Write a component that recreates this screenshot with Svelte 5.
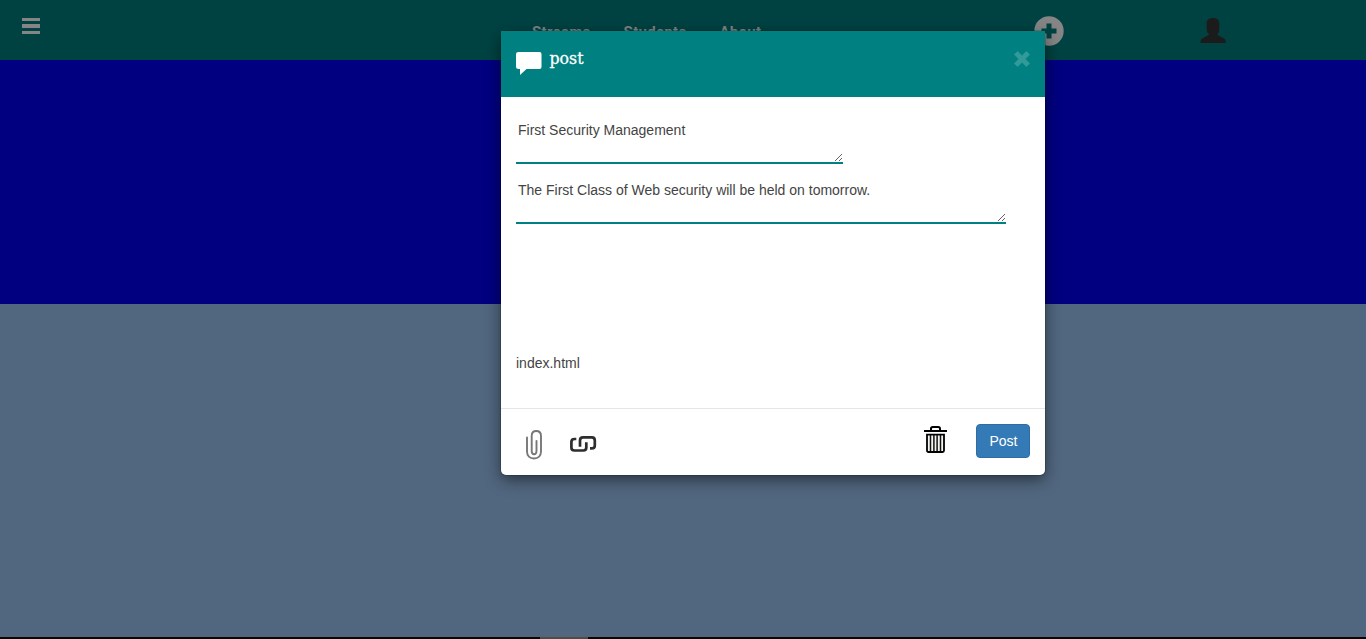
<script>
  const links = ['Streams', 'Students', 'About'];
  let title = $state('First Security Management');
  let message = $state('The First Class of Web security will be held on tomorrow.');
</script>

<div class="page">
  <header class="bar">
    <svg class="menu" width="18" height="17" viewBox="0 0 18 17" shape-rendering="crispEdges"><path d="M0 0h18v3H0zM0 6h18v4H0zM0 13h18v3H0z" fill="#858585" /></svg>
    <nav>
      {#each links as link}
        <span>{link}</span>
      {/each}
    </nav>
    <svg class="add" width="30" height="30" viewBox="0 0 30 30"><circle cx="15" cy="15" r="14.7" fill="#858585" /><path d="M12.500 7.500h5v5H22.500v5h-5V22.500h-5v-5H7.500v-5h5z" fill="#004242" /></svg>
    <svg class="user" width="26" height="26" viewBox="0 0 26 26"><path d="M13 0c4.300 0 6.300 2.200 6.300 5.500v5.500c0 2.300-.6 3.800-1.800 5v1l6.500 3.500q1.700 1 1.700 2.500v2H.5v-2q0-1.500 1.700-2.500L8.700 17v-1c-1.200-1.200-2-2.700-2-5V5.500C6.700 2.200 8.700 0 13 0z" fill="#1b1b1b" /></svg>
  </header>
  <div class="banner"></div>
  <main></main>
  <footer class="strip"><span></span></footer>

  <section class="modal">
    <div class="head">
      <svg width="27" height="24" viewBox="0 0 27 24"><path d="M3.500 0h21q2 0 2 2v13q0 2-2 2H11.500L5 23V17H3.500q-2.500 0-2.500-2V2q0-2 2.500-2z" fill="#fff" /></svg>
      <h1>post</h1>
      <svg class="close" width="16" height="16" viewBox="0 0 16 16"><path d="M3.600 0.300 8 4.700l4.400-4.400 3.300 3.300L11.300 8l4.400 4.400-3.300 3.300L8 11.300l-4.400 4.400-3.300-3.300L4.700 8 .3 3.600z" fill="#339a9a" stroke="#339a9a" stroke-width="0.500" /></svg>
    </div>
    <div class="body">
      <textarea class="subject" bind:value={title} spellcheck="false"></textarea>
      <textarea class="message" bind:value={message} spellcheck="false"></textarea>
      <p>index.html</p>
    </div>
    <div class="foot">
      <svg class="clip" width="16" height="30" viewBox="0 0 16 30" fill="none" stroke="#777" stroke-width="1.900" stroke-linecap="round"><path d="M1 7.500V21.500c0 4.300 2.800 7 7 7s7-2.700 7-7V6c0-3-1.900-5-4.700-5S5.700 3 5.700 6v15c0 2 .8 3.200 2.400 3.200s2.400-1.200 2.400-3.200V11" /></svg>
      <svg class="chain" width="27" height="17" viewBox="0 0 27 17" fill="none" stroke="#2e2e2e" stroke-width="2.700"><path d="M6.300 3H4.400q-3 0-3 3v5.500q0 3 3 3h8.900q3 0 3-3V6.300M10 10.700V4.400q0-3 3-3h8.800q3 0 3 3v5q0 3-3 3h-1.800" /></svg>
      <svg class="bin" width="23" height="28" viewBox="0 0 23 28"><path d="M7 4.500V2.800Q7 1 8.800 1h5.400Q16 1 16 2.800v1.700" fill="none" stroke="#000" stroke-width="2" /><rect y="4" width="23" height="2" /><path d="M3 8.700h17v15.800q0 1.500-1.500 1.500h-14Q3 26 3 24.500z" fill="#f4f4f0" stroke="#000" stroke-width="1.800" /><path d="M6.500 9v16M9.900 9v16M13.100 9v16M16.500 9v16" stroke="#111" stroke-width="1.500" /></svg>
      <button>Post</button>
    </div>
  </section>
</div>

<style>
  :global(body) { margin: 0; overflow: hidden; }
  .page {
    position: relative;
    display: flex;
    flex-direction: column;
    height: 639px;
    font: 14px/20px "Liberation Sans", Arial, sans-serif;
    color: #333;
  }
  .bar { display: flex; align-items: flex-start; height: 60px; background: #004242; }
  .menu { margin: 18px 0 0 22px; }
  nav {
    display: flex;
    gap: 33px;
    width: 502px;
    margin: 22px 0 0 492px;
    font: bold 15px/20px Roboto, sans-serif;
    letter-spacing: 0.3px;
    color: #808080;
  }
  .add { margin-top: 16px; }
  .user { margin: 18px 0 0 136px; }
  .banner { height: 244px; background: #000080; }
  main { flex: 1; background: #51677f; }
  .strip { display: flex; height: 2px; background: #080607; }
  .strip span { width: 48px; margin-left: 540px; background: #4c4c4c; }
  .modal {
    position: absolute;
    top: 31px;
    left: 501px;
    display: flex;
    flex-direction: column;
    width: 544px;
    height: 444px;
    border-radius: 5px;
    background: #fff;
    box-shadow: 0 5px 15px rgba(0, 0, 0, 0.5), 0 0 0 1px rgba(0, 0, 0, 0.15);
  }
  .head {
    box-sizing: border-box;
    display: flex;
    align-items: flex-start;
    height: 66px;
    padding: 21px 15px 0 14px;
    background: #008080;
  }
  h1 {
    margin: -6px 0 0 7.5px;
    font: 17.5px/24px "DejaVu Serif Condensed", "DejaVu Serif", serif;
    font-stretch: condensed;
    -webkit-text-stroke: 0.3px #fff;
    color: #fff;
  }
  .close { margin: -1px 0.5px 0 auto; }
  .body {
    box-sizing: border-box;
    display: flex;
    flex-direction: column;
    align-items: flex-start;
    height: 311px;
    padding: 21px 15px 0;
  }
  textarea {
    box-sizing: border-box;
    height: 46px;
    padding: 2px;
    border: 0;
    border-bottom: 2px solid #008080;
    outline: 0;
    background: transparent;
    color: #444;
    font: inherit;
  }
  .subject { width: 327px; }
  .message { width: 490px; margin-top: 14px; }
  p { margin: 129px 0 0; color: #444; }
  .foot {
    box-sizing: border-box;
    display: flex;
    align-items: flex-start;
    height: 67px;
    padding: 15px 15px 0 25px;
    border-top: 1px solid #e5e5e5;
  }
  .clip { margin-top: 6px; }
  .chain { margin: 12px 0 0 28px; }
  .bin { margin: 2px 29px 0 auto; }
  button {
    width: 54px;
    height: 34px;
    padding: 0 0 0 1px;
    border: 1px solid #2e6da4;
    border-radius: 4px;
    background: #337ab7;
    color: #fff;
    font: inherit;
  }
</style>
